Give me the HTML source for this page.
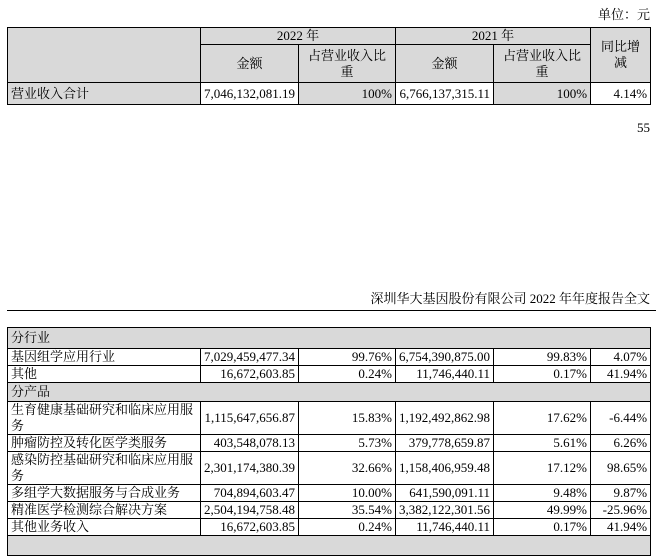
<!DOCTYPE html>
<html><head><meta charset="utf-8"><style>
body{margin:0;width:656px;height:538px;background:#fff;position:relative;overflow:hidden;font-family:"Liberation Serif","Noto Serif CJK SC",serif;font-size:13px;color:#000}
table{position:absolute;left:7px;border-collapse:collapse;table-layout:fixed}
td{border:1.5px solid #000;padding:0 3px;line-height:16px;overflow:hidden}
.g{background:#d9d9d9}
.r{text-align:right}.c{text-align:center}
.t{position:absolute}
</style></head><body>
<div class="t" style="right:6px;top:4px">单位：元</div>
<table style="top:27px;width:643px">
<colgroup><col style="width:193px"><col style="width:98px"><col style="width:97px"><col style="width:98px"><col style="width:97px"><col style="width:60px"></colgroup>
<tr style="height:17px"><td class="g" rowspan="2"></td><td class="g c" colspan="2">2022 年</td><td class="g c" colspan="2">2021 年</td><td class="g c" rowspan="2">同比增<br>减</td></tr>
<tr style="height:38px"><td class="g c">金额</td><td class="g c">占营业收入比<br>重</td><td class="g c">金额</td><td class="g c">占营业收入比<br>重</td></tr>
<tr style="height:22px"><td class="g">营业收入合计</td><td class="r">7,046,132,081.19</td><td class="g r">100%</td><td class="r">6,766,137,315.11</td><td class="g r">100%</td><td class="r">4.14%</td></tr>
</table>
<div class="t" style="right:6px;top:120px">55</div>
<div class="t" style="right:6px;top:288px">深圳华大基因股份有限公司 2022 年年度报告全文</div>
<div class="t" style="left:7px;top:310px;width:649px;height:1px;background:#000"></div>
<table style="top:327px;width:643px">
<colgroup><col style="width:193px"><col style="width:98px"><col style="width:97px"><col style="width:98px"><col style="width:97px"><col style="width:60px"></colgroup>
<tr style="height:21px" class="g"><td colspan="6">分行业</td></tr>
<tr style="height:16px"><td>基因组学应用行业</td><td class="r">7,029,459,477.34</td><td class="r">99.76%</td><td class="r">6,754,390,875.00</td><td class="r">99.83%</td><td class="r">4.07%</td></tr>
<tr style="height:16px"><td>其他</td><td class="r">16,672,603.85</td><td class="r">0.24%</td><td class="r">11,746,440.11</td><td class="r">0.17%</td><td class="r">41.94%</td></tr>
<tr style="height:19px" class="g"><td colspan="6">分产品</td></tr>
<tr style="height:33px"><td>生育健康基础研究和临床应用服<br>务</td><td class="r">1,115,647,656.87</td><td class="r">15.83%</td><td class="r">1,192,492,862.98</td><td class="r">17.62%</td><td class="r">-6.44%</td></tr>
<tr style="height:17px"><td>肿瘤防控及转化医学类服务</td><td class="r">403,548,078.13</td><td class="r">5.73%</td><td class="r">379,778,659.87</td><td class="r">5.61%</td><td class="r">6.26%</td></tr>
<tr style="height:33px"><td>感染防控基础研究和临床应用服<br>务</td><td class="r">2,301,174,380.39</td><td class="r">32.66%</td><td class="r">1,158,406,959.48</td><td class="r">17.12%</td><td class="r">98.65%</td></tr>
<tr style="height:17px"><td>多组学大数据服务与合成业务</td><td class="r">704,894,603.47</td><td class="r">10.00%</td><td class="r">641,590,091.11</td><td class="r">9.48%</td><td class="r">9.87%</td></tr>
<tr style="height:17px"><td>精准医学检测综合解决方案</td><td class="r">2,504,194,758.48</td><td class="r">35.54%</td><td class="r">3,382,122,301.56</td><td class="r">49.99%</td><td class="r">-25.96%</td></tr>
<tr style="height:17px"><td>其他业务收入</td><td class="r">16,672,603.85</td><td class="r">0.24%</td><td class="r">11,746,440.11</td><td class="r">0.17%</td><td class="r">41.94%</td></tr>
<tr style="height:20px" class="g"><td colspan="6"></td></tr>
</table>
</body></html>
